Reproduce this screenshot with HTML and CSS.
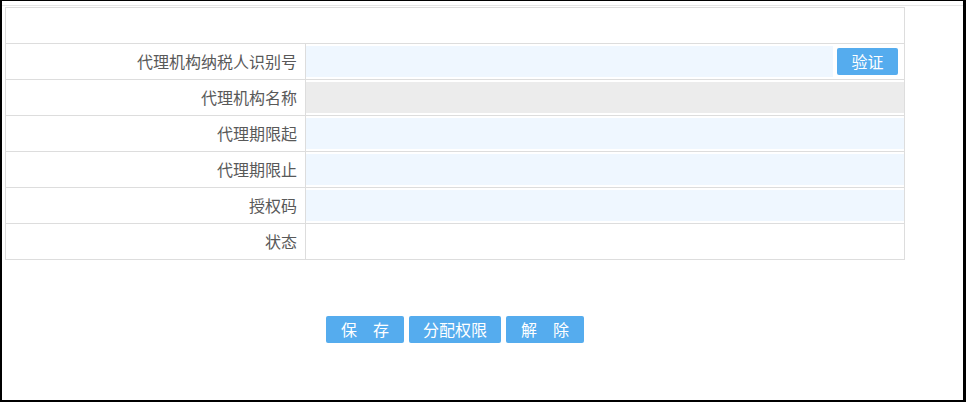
FILE: index.html
```html
<!DOCTYPE html>
<html lang="zh-CN">

<head>
    <meta charset="UTF-8">
    <meta name="viewport" content="width=device-width, initial-scale=1.0">
    <title>代理机构</title>
    <link rel="stylesheet" href="styles.css">
</head>

<body>
    <div class="frame">
        <div class="panel">
            <div class="form-table">
                <div class="form-row form-head"></div>
                <div class="form-row">
                    <div class="label">代理机构纳税人识别号</div>
                    <div class="value">
                        <input type="text" class="field">
                        <button type="button" class="btn btn-check">验证</button>
                    </div>
                </div>
                <div class="form-row">
                    <div class="label">代理机构名称</div>
                    <div class="value">
                        <input type="text" class="field readonly" readonly>
                    </div>
                </div>
                <div class="form-row">
                    <div class="label">代理期限起</div>
                    <div class="value">
                        <input type="text" class="field">
                    </div>
                </div>
                <div class="form-row">
                    <div class="label">代理期限止</div>
                    <div class="value">
                        <input type="text" class="field">
                    </div>
                </div>
                <div class="form-row">
                    <div class="label">授权码</div>
                    <div class="value">
                        <input type="text" class="field">
                    </div>
                </div>
                <div class="form-row">
                    <div class="label">状态</div>
                    <div class="value"></div>
                </div>
            </div>

            <div class="actions">
                <button type="button" class="btn">保　存</button>
                <button type="button" class="btn">分配权限</button>
                <button type="button" class="btn">解　除</button>
            </div>
        </div>
    </div>
</body>

</html>
```

FILE: styles.css
```css
body {
    margin: 0;
    padding: 0;
    font-family: "Microsoft YaHei", "Noto Sans CJK SC", sans-serif;
    background-color: #ffffff;
}

.frame {
    width: 966px;
    height: 402px;
    box-sizing: border-box;
    border: 2px solid #000;
    border-top-width: 1px;
    border-right-width: 3px;
}

.panel {
    margin-top: 4px;
    padding-left: 3px;
    border-top: 1px solid #e6e6e6;
}

.form-table {
    width: 900px;
    box-sizing: border-box;
    margin-top: 1px;
    border: 1px solid #dddddd;
    border-bottom: none;
}

.form-row {
    display: grid;
    grid-template-columns: 300px 1fr;
    border-bottom: 1px solid #dddddd;
}

.form-head {
    display: block;
    height: 35px;
}

.label {
    height: 35px;
    line-height: 35px;
    padding-right: 8px;
    text-align: right;
    font-size: 16px;
    color: #595959;
    border-right: 1px solid #dddddd;
}

.value {
    display: flex;
    align-items: center;
    height: 35px;
    box-sizing: border-box;
    padding: 2px 0;
}

.field {
    flex: 1;
    min-width: 0;
    height: 31px;
    box-sizing: border-box;
    margin: 0;
    padding: 0 8px;
    border: none;
    outline: none;
    font-size: 14px;
    background-color: #eff7ff;
}

.field.readonly {
    background-color: #ececec;
}

.btn {
    height: 27px;
    min-width: 78px;
    padding: 0 14px;
    font-family: inherit;
    font-size: 16px;
    line-height: 27px;
    color: #ffffff;
    background-color: #55acee;
    border: none;
    border-radius: 2px;
    cursor: pointer;
}

.btn-check {
    min-width: 0;
    width: 61px;
    padding: 0;
    margin: 0 6px 0 4px;
}

.actions {
    width: 900px;
    display: flex;
    justify-content: center;
    gap: 5px;
    margin-top: 56px;
}
```
